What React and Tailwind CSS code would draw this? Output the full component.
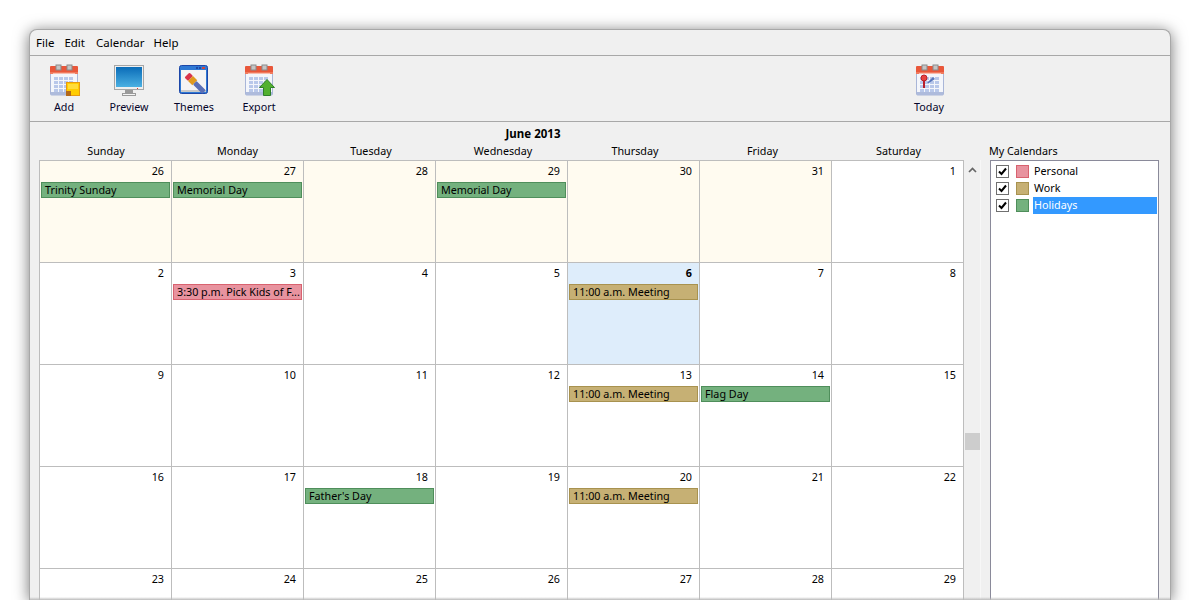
import React from "react";

const days = [
  { name: "Sunday", cls: "" },
  { name: "Monday", cls: "pr-[1px]" },
  { name: "Tuesday", cls: "pl-[2px]" },
  { name: "Wednesday", cls: "pl-[2px]" },
  { name: "Thursday", cls: "pl-[2px]" },
  { name: "Friday", cls: "pr-[7px]" },
  { name: "Saturday", cls: "pl-[1px]" },
];

const colors = {
  pink: "bg-[#e8939f] border-[#d8626f]",
  tan: "bg-[#c6b074] border-[#a8924f]",
  green: "bg-[#74b17e] border-[#4f8e5b]",
};

const cells = [
  { n: 26, other: true, ev: ["Trinity Sunday", "green"] },
  { n: 27, other: true, ev: ["Memorial Day", "green"] },
  { n: 28, other: true },
  { n: 29, other: true, ev: ["Memorial Day", "green"] },
  { n: 30, other: true },
  { n: 31, other: true },
  { n: 1 },
  { n: 2 },
  { n: 3, ev: ["3:30 p.m. Pick Kids of F...", "pink"] },
  { n: 4 },
  { n: 5 },
  { n: 6, today: true, ev: ["11:00 a.m. Meeting", "tan"] },
  { n: 7 },
  { n: 8 },
  { n: 9 },
  { n: 10 },
  { n: 11 },
  { n: 12 },
  { n: 13, ev: ["11:00 a.m. Meeting", "tan"] },
  { n: 14, ev: ["Flag Day", "green"] },
  { n: 15 },
  { n: 16 },
  { n: 17 },
  { n: 18, ev: ["Father's Day", "green"] },
  { n: 19 },
  { n: 20, ev: ["11:00 a.m. Meeting", "tan"] },
  { n: 21 },
  { n: 22 },
  { n: 23 },
  { n: 24 },
  { n: 25 },
  { n: 26 },
  { n: 27 },
  { n: 28 },
  { n: 29 },
];

const calendars = [
  { name: "Personal", color: "pink" },
  { name: "Work", color: "tan" },
  { name: "Holidays", color: "green", selected: true },
];

// page of the calendar, shared by Add, Export and Today
const CalendarBase = ({ x = 2 }) => (
  <g transform={`translate(${x} 1)`}>
    <rect x="0.5" y="3" width="27" height="27" rx="1" fill="#f4f6fb" stroke="#a9b6d8" />
    <rect x="1" y="27" width="26" height="3" fill="#aebbdc" />
    <rect x="0" y="1" width="28" height="8" rx="1" fill="#e9573a" />
    <rect x="0" y="7" width="28" height="2" fill="#f0795c" />
    <rect x="3" y="8" width="22" height="1" fill="#ffffff" opacity="0.5" />
    <rect x="6" y="0" width="5" height="5" fill="#c4c4c4" stroke="#8a8a8a" />
    <rect x="17" y="0" width="5" height="5" fill="#c4c4c4" stroke="#8a8a8a" />
    <g fill="#b9c8ea">
      {[4, 9, 14, 19].map((x1) =>
        [12, 16, 20, 24].map((y1) => <rect key={`${x1}-${y1}`} x={x1} y={y1} width="4" height="3" />)
      )}
    </g>
  </g>
);

const AddIcon = () => (
  <svg width="32" height="33" viewBox="0 0 32 33">
    <CalendarBase />
    <rect x="18.5" y="18.5" width="13" height="13" fill="#ffcc00" stroke="#e79a11" />
    <rect x="20" y="20" width="10" height="5" fill="#ffdc3a" />
    <path d="M18 27h5v5h-5z" fill="#b2681a" />
  </svg>
);

const PreviewIcon = () => (
  <svg width="32" height="33" viewBox="0 0 32 33">
    <defs>
      <linearGradient id="scr" x1="0" y1="0" x2="0" y2="1">
        <stop offset="0" stopColor="#0a6cb8" />
        <stop offset="1" stopColor="#4bb0e2" />
      </linearGradient>
    </defs>
    <rect x="1.5" y="1.5" width="29" height="24" fill="#efefef" stroke="#a6a6a6" />
    <rect x="3" y="3" width="26" height="20" fill="url(#scr)" />
    <rect x="24" y="24" width="1" height="1" fill="#e03030" />
    <rect x="12" y="26" width="8" height="3" fill="#9a9a9a" />
    <rect x="9.5" y="29.5" width="13" height="2" fill="#f4f4f4" stroke="#9a9a9a" />
  </svg>
);

const ThemesIcon = () => (
  <svg width="32" height="33" viewBox="0 0 32 33">
    <rect x="1.5" y="1.5" width="28" height="28" rx="2" fill="#2f79d4" stroke="#1d47a8" />
    <rect x="3" y="6" width="25" height="22" fill="#f4f4f4" />
    <rect x="3" y="26" width="25" height="2" fill="#c9c9c9" />
    <rect x="18" y="3" width="2" height="2" fill="#1d47a8" />
    <rect x="21" y="3" width="2" height="2" fill="#1d47a8" />
    <rect x="24" y="3" width="3" height="2" fill="#d0453a" />
    <g transform="translate(9 11) rotate(45)">
      <rect x="0" y="-3.500" width="5" height="7" rx="1" fill="#d9344a" />
      <rect x="5" y="-3.500" width="6" height="7" fill="#e09a1e" />
      <rect x="11" y="-2.500" width="13" height="5" rx="1" fill="#5a6fb6" />
    </g>
  </svg>
);

const ExportIcon = () => (
  <svg width="32" height="33" viewBox="0 0 32 33">
    <CalendarBase />
    <path d="M24 15.500l7.500 8h-4v8h-7v-8h-4z" fill="#52b02f" stroke="#2f7f2a" />
  </svg>
);

const TodayIcon = () => (
  <svg width="32" height="33" viewBox="0 0 32 33">
    <CalendarBase x={3} />
    <path d="M14 19l6-6 2 2-6 4z" fill="#5a78bc" />
    <rect x="10" y="15" width="2" height="9" fill="#b8202c" />
    <circle cx="11" cy="14" r="3" fill="#e8423f" stroke="#b8202c" />
  </svg>
);

const tools = [
  { label: "Add", icon: <AddIcon /> },
  { label: "Preview", icon: <PreviewIcon /> },
  { label: "Themes", icon: <ThemesIcon /> },
  { label: "Export", icon: <ExportIcon /> },
];

const ToolButton = ({ label, icon }) => (
  <div className="w-[64px] flex flex-col items-center">
    {icon}
    <span className="mt-[2px] text-[#05052a] leading-[16px]">{label}</span>
  </div>
);

const Cell = ({ cell }) => {
  let bg = "bg-white";
  if (cell.other) bg = "bg-[#fffbf0]";
  if (cell.today) bg = "bg-[#deedfb]";
  return (
    <div className={`h-[102px] border-r border-b border-[#bdbdbd] px-[1px] ${bg}`}>
      <div className={`h-[21px] pr-[6px] text-right leading-[20px] ${cell.today ? "font-bold" : ""}`}>{cell.n}</div>
      {cell.ev && (
        <div className={`h-[16px] border pl-[3px] leading-[14px] whitespace-nowrap overflow-hidden ${colors[cell.ev[1]]}`}>
          {cell.ev[0]}
        </div>
      )}
    </div>
  );
};

export default function App() {
  return (
    <div className="h-[600px] overflow-hidden bg-white pt-[29px] pl-[29px] font-['Noto_Sans',sans-serif] text-[10.75px] text-black">
      <div className="relative w-[1142px] h-[571px] rounded-t-lg border-t border-x border-[#a8a8a8] bg-[#f0f0f0] shadow-[0_2px_15px_rgba(0,0,0,0.55)]">
        <div className="h-[26px] flex items-center gap-[10px] pl-[6px] border-b border-[#a8a8a8] leading-none text-[11.5px]">
          <span>File</span>
          <span>Edit</span>
          <span className="ml-[1px]">Calendar</span>
          <span className="-ml-[1px]">Help</span>
        </div>
        <div className="h-[66px] flex pt-[8px] pl-[2px] border-b border-[#a8a8a8]">
          {tools.map((t) => (
            <div key={t.label} className="mr-[1px]">
              <ToolButton label={t.label} icon={t.icon} />
            </div>
          ))}
          <div className="ml-[605px]">
            <ToolButton label="Today" icon={<TodayIcon />} />
          </div>
        </div>
        <div className="w-[1006px] text-center text-[11.5px] font-bold leading-[14px] mt-[5px]">June 2013</div>
        <div className="flex">
          <div className="pl-[9px]">
            <div className="flex h-[19px] pl-[1px]">
              {days.map((d) => (
                <div key={d.name} className={`w-[132px] text-center leading-[18px] pt-[1px] ${d.cls}`}>{d.name}</div>
              ))}
            </div>
            <div className="flex">
              <div className="grid grid-cols-[repeat(7,132px)] border-l border-t border-[#bdbdbd]">
                {cells.map((c, i) => (
                  <Cell key={i} cell={c} />
                ))}
              </div>
              <div className="relative w-[17px] flex justify-center pt-[7px] bg-[#f0f0f0] border-r border-[#f7f7f7]">
                <svg className="block" width="9" height="6" viewBox="0 0 9 6">
                  <path d="M1 5l3.500-3.500L8 5" fill="none" stroke="#666" strokeWidth="1.700" />
                </svg>
                <div className="absolute left-[1px] top-[273px] w-[15px] h-[17px] bg-[#cdcdcd]" />
              </div>
            </div>
          </div>
          <div className="ml-[9px]">
            <div className="h-[19px] -ml-[1px] leading-[18px] pt-[1px]">My Calendars</div>
            <div className="w-[169px] h-[500px] bg-white border border-[#8a8a9a] pl-[5px] pt-[2px]">
              {calendars.map((c) => (
                <div key={c.name} className="h-[17px] flex items-center">
                  <span className="w-[13px] h-[13px] border border-[#707070] bg-white flex items-center justify-center">
                    <svg width="11" height="11" viewBox="0 0 11 11">
                      <path d="M2 5.500l2.500 2.500L9 2.500" fill="none" stroke="#000" strokeWidth="2" />
                    </svg>
                  </span>
                  <span className={`ml-[7px] w-[13px] h-[13px] border ${colors[c.color]}`} />
                  <span className={`ml-[4px] w-[124px] h-[17px] pl-[1px] leading-[17px] ${c.selected ? "bg-[#3399ff] text-white" : ""}`}>
                    {c.name}
                  </span>
                </div>
              ))}
            </div>
          </div>
        </div>
        <div className="absolute left-0 right-0 bottom-0 h-[3px] bg-gradient-to-b from-transparent to-[#bbbbbb]" />
      </div>
    </div>
  );
}
